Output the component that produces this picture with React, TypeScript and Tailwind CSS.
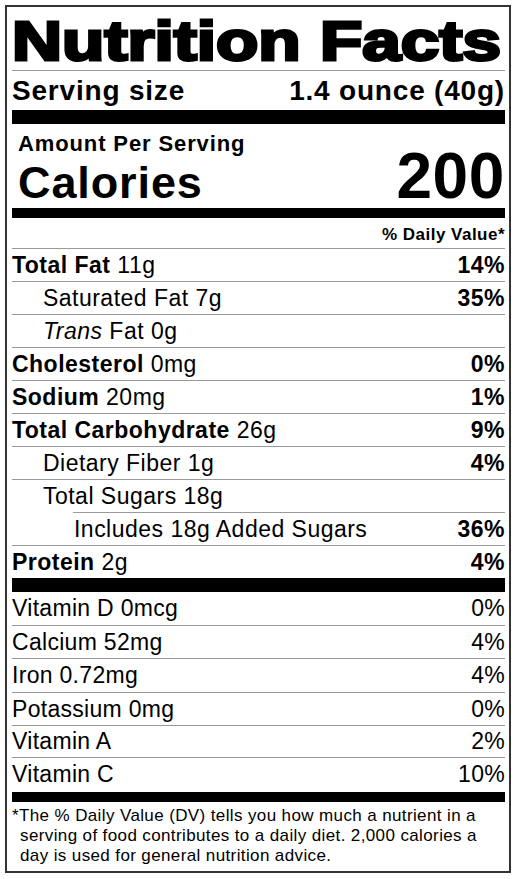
import React from "react";

function Row({
  children,
  dv,
  className = "",
  dvBold = true,
}: {
  children: React.ReactNode;
  dv?: string;
  className?: string;
  dvBold?: boolean;
}) {
  return (
    <div
      className={
        "flex justify-between h-[33px] leading-[32px] border-t border-[#9a9a9a] text-[23px] " +
        className
      }
    >
      <span className="whitespace-nowrap">{children}</span>
      {dv ? (
        <span className={dvBold ? "font-bold" : "font-normal"}>{dv}</span>
      ) : null}
    </div>
  );
}

export default function App() {
  return (
    <div className="w-[517px] h-[879px] bg-white pt-[5px] pl-[5px] text-black [font-family:'Liberation_Sans',Arial,Helvetica,sans-serif]">
      <div className="w-[506px] h-[868px] border-2 border-[#333] pl-[5px] pr-[4px] flex flex-col tracking-[0.48px]">
        {/* Title */}
        <div className="h-[64px] pt-[5px] border-b border-[#9a9a9a] overflow-visible">
          <span className="inline-block origin-left scale-x-[1.26] text-[55px] leading-[58px] font-bold tracking-normal whitespace-nowrap [-webkit-text-stroke:3px_#000]">
            Nutrition Facts
          </span>
        </div>

        {/* Serving size */}
        <div className="h-[39px] leading-[39px] flex justify-between text-[28px] font-bold tracking-[0.8px]">
          <span>Serving size</span>
          <span>1.4 ounce (40g)</span>
        </div>

        <div className="h-[14px] bg-black" />

        {/* Calories */}
        <div className="h-[84px] pt-[11px] pl-[6px]">
          <div className="text-[22px] leading-[17px] font-bold tracking-[0.88px]">Amount Per Serving</div>
          <div className="flex justify-between items-baseline">
            <span className="text-[45px] leading-[48px] font-bold tracking-[0.9px]">Calories</span>
            <span className="text-[64px] leading-[48px] font-bold tracking-[0.6px]">200</span>
          </div>
        </div>

        <div className="h-[10px] bg-black" />

        {/* % Daily Value */}
        <div className="h-[30px] pt-[3px] leading-[27px] text-[17px] font-bold text-right">
          % Daily Value*
        </div>

        {/* Nutrients */}
        <Row dv="14%">
          <b>Total Fat</b> 11g
        </Row>
        <Row dv="35%" className="pl-[31px]">
          Saturated Fat 7g
        </Row>
        <Row className="pl-[31px]">
          <i>Trans</i> Fat 0g
        </Row>
        <Row dv="0%">
          <b>Cholesterol</b> 0mg
        </Row>
        <Row dv="1%">
          <b>Sodium</b> 20mg
        </Row>
        <Row dv="9%">
          <b>Total Carbohydrate</b> 26g
        </Row>
        <Row dv="4%" className="pl-[31px]">
          Dietary Fiber 1g
        </Row>
        <Row className="pl-[31px]">Total Sugars 18g</Row>
        <Row dv="36%" className="ml-[61px] pl-[1px]">
          Includes 18g Added Sugars
        </Row>
        <Row dv="4%">
          <b>Protein</b> 2g
        </Row>

        <div className="h-[14px] bg-black" />

        {/* Vitamins */}
        <div className="flex justify-between h-[33px] leading-[33px] text-[23px] tracking-[0.3px]">
          <span>Vitamin D 0mcg</span>
          <span>0%</span>
        </div>
        <Row dv="4%" dvBold={false} className="tracking-[0.3px]">
          Calcium 52mg
        </Row>
        <Row dv="4%" dvBold={false} className="!h-[34px] !leading-[33px] tracking-[0.3px]">
          Iron 0.72mg
        </Row>
        <Row dv="0%" dvBold={false} className="tracking-[0.3px]">
          Potassium 0mg
        </Row>
        <Row dv="2%" dvBold={false} className="!h-[32px] !leading-[31px] tracking-[0.3px]">
          Vitamin A
        </Row>
        <Row dv="10%" dvBold={false} className="!h-[35px] !leading-[33px] tracking-[0.3px]">
          Vitamin C
        </Row>

        <div className="h-[10px] bg-black" />

        {/* Footnote */}
        <p className="pt-[4px] pl-[8px] -indent-[8px] text-[17px] leading-[20px] tracking-[0.38px] whitespace-nowrap">
          *The % Daily Value (DV) tells you how much a nutrient in a
          <br />
          serving of food contributes to a daily diet. 2,000 calories a
          <br />
          day is used for general nutrition advice.
        </p>
      </div>
    </div>
  );
}
